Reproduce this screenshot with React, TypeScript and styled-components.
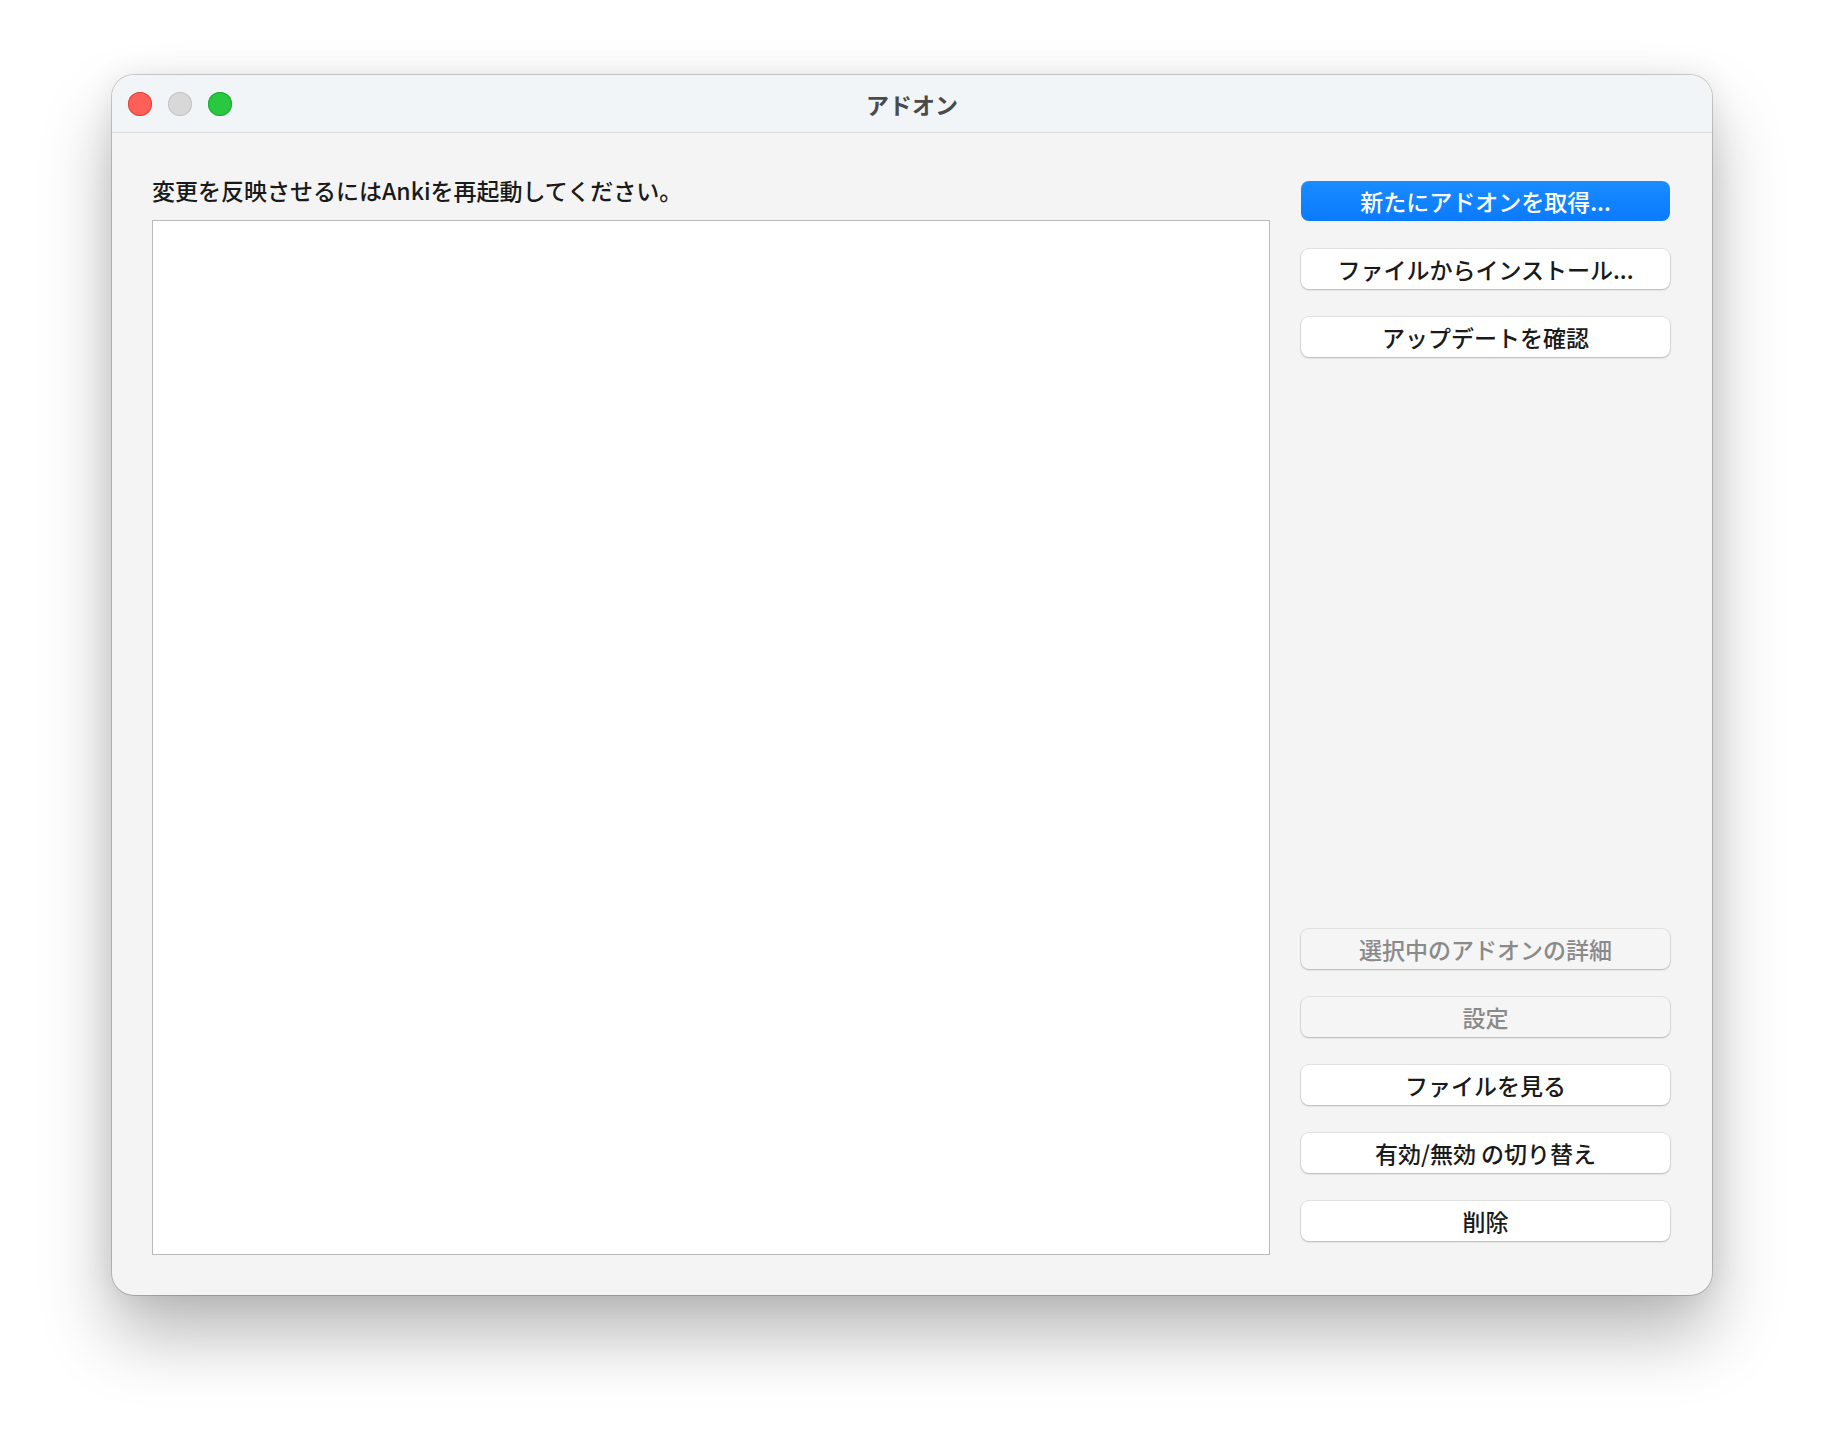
import React from "react";
import styled, { createGlobalStyle } from "styled-components";

const Global = createGlobalStyle`
  html, body { margin: 0; padding: 0; background: #ffffff; }
  body { font-family: "Noto Sans CJK JP", "Noto Sans", sans-serif; }
`;

const Page = styled.div`
  width: 1824px; height: 1444px; box-sizing: border-box;
  padding: 75px 0 0 112px;
`;

const Window = styled.div`
  width: 1600px; height: 1220px; border-radius: 22px; overflow: hidden;
  background: #f4f4f4; display: flex; flex-direction: column;
  box-shadow: 0 0 0 1px rgba(0,0,0,0.18), 0 40px 70px rgba(0,0,0,0.28), 0 0 30px rgba(0,0,0,0.08);
`;

const TitleBar = styled.div`
  height: 57px; background: #f1f5f7; border-bottom: 1px solid #d8dcde;
  display: flex; align-items: center; position: relative; padding-left: 16px; gap: 16px;
`;

const Light = styled.span<{ c: string; b: string }>`
  width: 24px; height: 24px; border-radius: 50%; background: ${p => p.c};
  box-shadow: inset 0 0 0 1px ${p => p.b};
`;

const Title = styled.div`
  position: absolute; left: 0; right: 0; text-align: center;
  font-size: 23px; font-weight: 700; color: #4a4a4a;
`;

const Body = styled.div`
  flex: 1; display: flex; padding: 30px 36px 40px 40px; gap: 31px;
`;

const Left = styled.div`
  width: 1118px; display: flex; flex-direction: column;
`;

const Label = styled.div`
  font-size: 23px; font-weight: 500; color: #1a1a1a; height: 57px; line-height: 54px;
`;

const List = styled.div`
  flex: 1; background: #fff; border: 1px solid #b9b9b9;
`;

const Right = styled.div`
  width: 369px; display: flex; flex-direction: column; padding: 18px 0 14px; gap: 28px;
`;

const Spacer = styled.div` flex: 1; `;

const Btn = styled.div<{ primary?: boolean; disabled?: boolean }>`
  height: 40px; border-radius: 8px; display: flex; align-items: center; justify-content: center;
  font-size: 23px; font-weight: 500; flex-shrink: 0;
  background: ${p => p.primary ? "linear-gradient(#1a8cff, #0a7aff)" : p.disabled ? "#f5f5f5" : "#fff"};
  color: ${p => p.primary ? "#fff" : p.disabled ? "#8a8a8a" : "#1a1a1a"};
  box-shadow: ${p => p.primary ? "none" : "0 0 0 1px rgba(0,0,0,0.07), 0 1px 2px rgba(0,0,0,0.2)"};
`;

export default function App() {
  return (
    <Page>
      <Global />
      <Window>
        <TitleBar>
          <Light c="#ff5f57" b="#e0443e" />
          <Light c="#d8d8d8" b="#c4c4c4" />
          <Light c="#28c840" b="#1fa834" />
          <Title>アドオン</Title>
        </TitleBar>
        <Body>
          <Left>
            <Label>変更を反映させるにはAnkiを再起動してください。</Label>
            <List />
          </Left>
          <Right>
            <Btn primary>新たにアドオンを取得...</Btn>
            <Btn>ファイルからインストール...</Btn>
            <Btn>アップデートを確認</Btn>
            <Spacer />
            <Btn disabled>選択中のアドオンの詳細</Btn>
            <Btn disabled>設定</Btn>
            <Btn>ファイルを見る</Btn>
            <Btn>有効/無効 の切り替え</Btn>
            <Btn>削除</Btn>
          </Right>
        </Body>
      </Window>
    </Page>
  );
}
